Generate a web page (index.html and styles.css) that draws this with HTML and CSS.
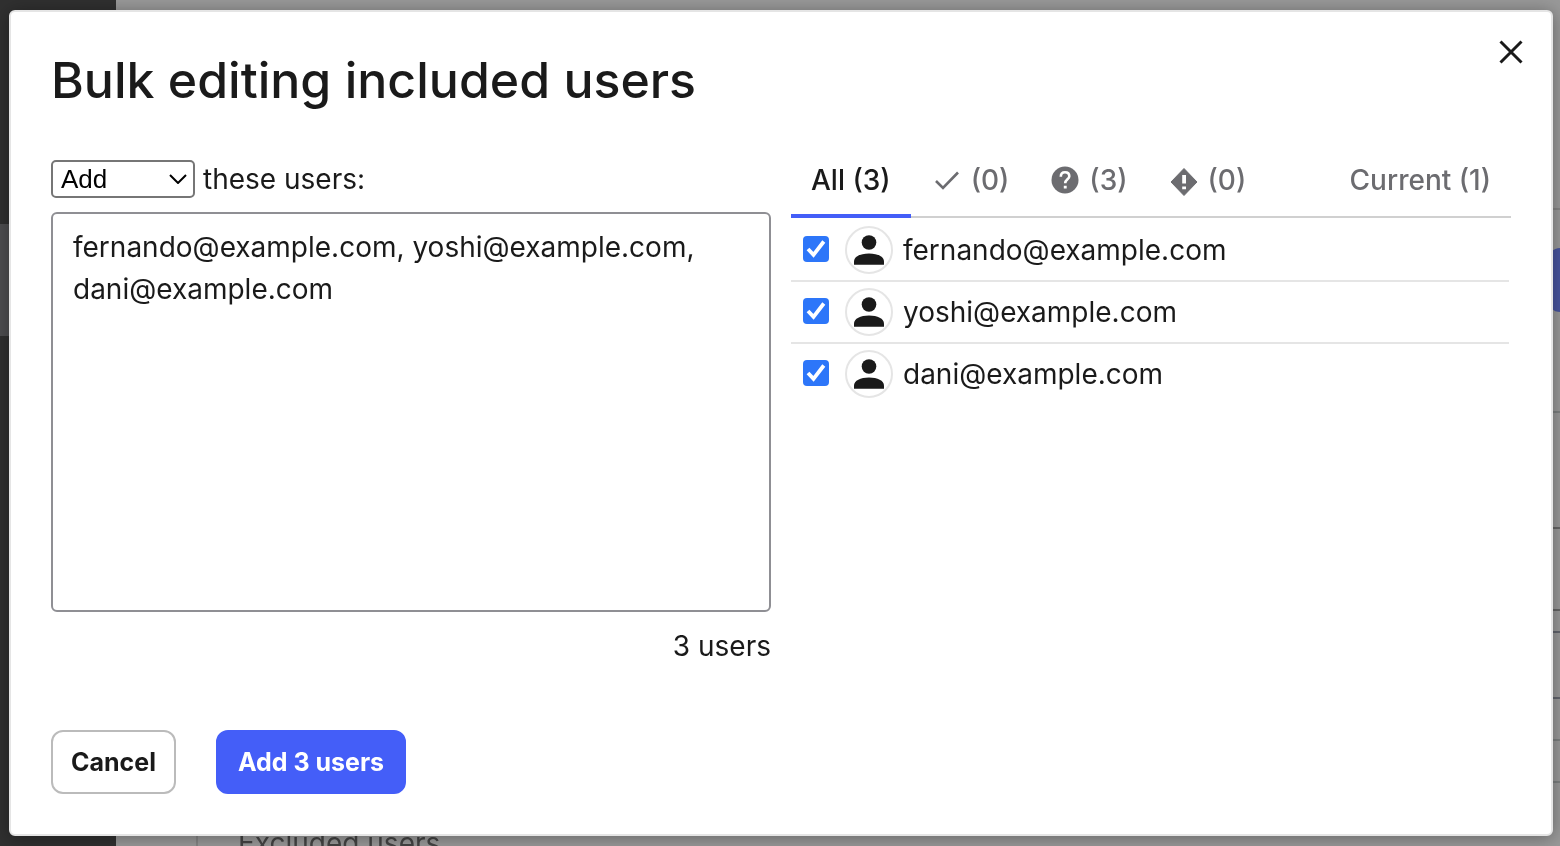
FILE: index.html
```html
<!DOCTYPE html>
<html lang="en">
<head>
<meta charset="utf-8">
<title>Bulk editing included users</title>
<link rel="stylesheet" href="styles.css">
</head>
<body>
<svg class="sprite" aria-hidden="true">
  <symbol id="person" viewBox="0 0 30 30"><circle cx="15" cy="7.500" r="7.300"/><path d="M0 29.700V26.500C0 21.500 6.500 18.400 15 18.400S30 21.500 30 26.500V29.700Z"/></symbol>
  <symbol id="tick" viewBox="0 0 26 26"><path d="M5 13 10.500 18.800 20.800 5.500" fill="none" stroke="#fff" stroke-width="3.800"/></symbol>
</svg>

<div class="page" aria-hidden="true">
  <div class="sidebar"><div class="sidebar-active"></div></div>
  <div class="content">
    <div class="panel"><p class="panel-title">Excluded users</p></div>
    <div class="edge">
      <div class="edge-header"></div>
      <div class="edge-action"><span class="edge-button"></span></div>
      <div class="edge-box"></div>
      <div class="edge-gap"></div>
      <div class="edge-field"></div>
      <div class="edge-row"></div>
      <div class="edge-row"></div>
    </div>
  </div>
</div>

<main class="dialog" role="dialog" aria-labelledby="dialog-title">
  <button class="close" type="button" aria-label="Close">
    <svg viewBox="0 0 24 24"><path d="M1.500 1.500 22.500 22.500M22.500 1.500 1.500 22.500"/></svg>
  </button>
  <h1 class="title" id="dialog-title">Bulk editing included users</h1>
  <div class="columns">
    <section class="editor">
      <div class="mode">
        <div class="select-wrap">
          <select class="select" id="mode"><option>Add</option><option>Remove</option></select>
          <svg class="chevron" viewBox="0 0 18 10"><path d="M1 1 9 9 17 1"/></svg>
        </div>
        <label for="mode">these users:</label>
      </div>
      <textarea class="emails" aria-label="Users" spellcheck="false">fernando@example.com, yoshi@example.com, dani@example.com</textarea>
      <p class="count">3 users</p>
    </section>
    <section class="results">
      <div class="tabs" role="tablist">
        <button class="tab tab-selected" type="button" role="tab" aria-selected="true">All (3)</button>
        <button class="tab" type="button" role="tab" aria-label="Found (0)">
          <svg class="tab-icon" viewBox="0 0 32 32"><path d="M5 17 12 24 27 8.500" fill="none" stroke="currentColor" stroke-width="2.600"/></svg>(0)
        </button>
        <button class="tab" type="button" role="tab" aria-label="Unknown (3)">
          <svg class="tab-icon" viewBox="0 0 32 32"><circle cx="16" cy="16" r="13.500" fill="currentColor"/><path d="M11.800 12.800C11.800 9.800 13.500 8.200 16 8.200S20.300 9.800 20.300 12.300C20.300 15.200 16.200 15.500 16.200 19.200" fill="none" stroke="#fff" stroke-width="2.600"/><path d="M14.800 21.700h2.900v2.900h-2.900z" fill="#fff"/></svg>(3)
        </button>
        <button class="tab" type="button" role="tab" aria-label="Invalid (0)">
          <svg class="tab-icon" viewBox="0 0 32 32"><path d="M16 4.500 29 18 16 31.500 3 18Z" fill="currentColor" stroke="currentColor" stroke-linejoin="round"/><path d="M14.200 11h3.800v8.500h-3.800zM14.200 22.500h3.800v2.800h-3.800z" fill="#fff"/></svg>(0)
        </button>
        <button class="tab tab-current" type="button" role="tab">Current (1)</button>
      </div>
      <ul class="users">
        <li class="user">
          <span class="check"><input class="checkbox" id="u1" type="checkbox" checked><svg class="tick"><use href="#tick"/></svg></span>
          <span class="avatar"><svg><use href="#person"/></svg></span>
          <label for="u1">fernando@example.com</label>
        </li>
        <li class="user">
          <span class="check"><input class="checkbox" id="u2" type="checkbox" checked><svg class="tick"><use href="#tick"/></svg></span>
          <span class="avatar"><svg><use href="#person"/></svg></span>
          <label for="u2">yoshi@example.com</label>
        </li>
        <li class="user">
          <span class="check"><input class="checkbox" id="u3" type="checkbox" checked><svg class="tick"><use href="#tick"/></svg></span>
          <span class="avatar"><svg><use href="#person"/></svg></span>
          <label for="u3">dani@example.com</label>
        </li>
      </ul>
    </section>
  </div>
  <footer class="actions">
    <button class="button" type="button">Cancel</button>
    <button class="button button-primary" type="button">Add 3 users</button>
  </footer>
</main>
</body>
</html>
```
FILE: styles.css
```css
* { box-sizing: border-box; }

body {
  margin: 0;
  min-height: 100vh;
  display: flex;
  padding: 10px 7px 10px 9px;
  overflow: hidden;
  font: 28px/42px Inter, sans-serif;
  color: #1a1a1a;
}

button, select, textarea { font: inherit; color: inherit; margin: 0; }
.sprite { position: absolute; width: 0; height: 0; }

/* Dimmed page under the dialog */
.page { position: fixed; inset: 0; display: flex; background: #999; }
.sidebar { width: 116px; padding-top: 224px; background: #303030; }
.sidebar-active { height: 112px; background: #4e4e50; }
.content { flex: 1; display: flex; justify-content: space-between; padding-left: 80px; }
.panel { align-self: flex-end; padding-left: 40px; border-left: 2px solid #858585; }
.panel-title { margin: 0 0 -18px; color: #444; }
.edge { width: 20px; }
.edge-header { height: 210px; border-bottom: 2px solid #858585; }
.edge-action { height: 203px; padding-top: 38px; border-bottom: 2px solid #7d8080; }
.edge-button { display: block; height: 64px; margin-left: 8px; margin-right: -12px; border-radius: 12px; background: #47549f; }
.edge-box { height: 84px; margin-top: 114px; border: solid #666; border-width: 2px 0; }
.edge-gap { height: 20px; }
.edge-field { height: 68px; border: solid #62656d; border-width: 2px 0; }
.edge-row { height: 42px; border-bottom: 2px solid #7d8080; }

.dialog {
  position: relative;
  flex: 1;
  display: flex;
  flex-direction: column;
  padding: 36px 40px 40px;
  border: 2px solid #e5e5e5;
  border-radius: 6px;
  background: #fff;
  box-shadow: 0 2px 18px rgba(0, 0, 0, 0.35);
}
.title { margin: 0 0 48px; font-size: 50px; line-height: 64px; font-weight: 500; }
.close { position: absolute; top: 20px; right: 20px; width: 40px; height: 40px; padding: 8px; border: 0; background: none; }
.close svg { display: block; width: 24px; height: 24px; fill: none; stroke: #1a1a1a; stroke-width: 3; }

.columns { flex: 1; display: grid; grid-template-columns: 1fr 1fr; gap: 20px; }
.editor { display: flex; flex-direction: column; }
.mode { display: flex; align-items: center; gap: 8px; height: 38px; margin-bottom: 14px; }
.select-wrap { position: relative; width: 144px; }
.select {
  display: block;
  width: 100%;
  height: 38px;
  padding: 0 8px;
  border: 2px solid #767676;
  border-radius: 5px;
  background: #fff;
  color: #000;
  font: 26px "Liberation Sans", Arial, sans-serif;
  appearance: none;
}
.chevron { position: absolute; top: 14px; right: 8px; width: 18px; height: 10px; fill: none; stroke: #000; stroke-width: 2; pointer-events: none; }
.emails { height: 400px; padding: 12px 20px; border: 2px solid #8f8f94; border-radius: 6px; resize: none; }
.count { margin: 13px 0 0; text-align: right; }

.tabs { display: flex; height: 58px; border-bottom: 2px solid #d0d0d0; }
.tab {
  display: flex;
  align-items: center;
  gap: 8px;
  height: 58px;
  padding: 0 20px 14px;
  border: 0;
  border-bottom: 4px solid transparent;
  background: none;
  color: #6c6c70;
  font-weight: 500;
}
.tab-icon { width: 32px; height: 32px; }
.tab-selected { border-color: #445ef8; color: #1a1a1a; }
.tab-current { margin-left: auto; }

.users { margin: 0; padding: 2px 2px 0 0; list-style: none; }
.user { display: flex; align-items: center; height: 62px; padding-left: 12px; border-bottom: 2px solid #e5e5e5; }
.user:last-child { border-bottom-color: transparent; }
.check { display: grid; margin: 0 16px 2px 0; }
.checkbox { grid-area: 1 / 1; appearance: none; width: 26px; height: 26px; margin: 0; border-radius: 4px; background: #2d76f9; }
.tick { grid-area: 1 / 1; width: 26px; height: 26px; pointer-events: none; }
.avatar { display: grid; place-items: center; width: 48px; height: 48px; margin-right: 10px; border: 2px solid #e5e5e5; border-radius: 50%; }
.avatar svg { width: 30px; height: 30px; fill: #1a1a1a; }

.actions { display: flex; gap: 40px; }
.button {
  height: 64px;
  min-width: 125px;
  padding: 0 16px;
  border: 2px solid #bbb;
  border-radius: 12px;
  background: #fff;
  font-size: 25px;
  font-weight: 700;
}
.button-primary { min-width: 190px; border-color: #445ef8; background: #445ef8; color: #fff; }
```
